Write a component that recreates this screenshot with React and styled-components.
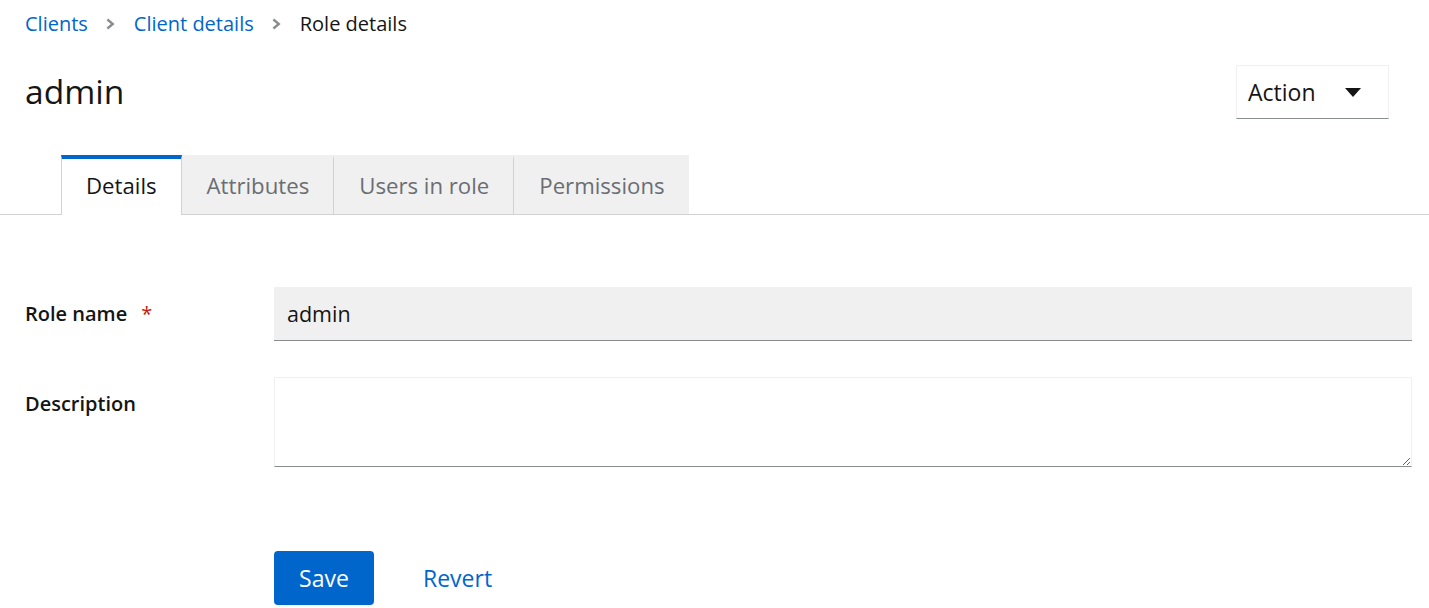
import React from 'react';
import styled, { createGlobalStyle } from 'styled-components';

const GlobalStyle = createGlobalStyle`
*
{
    margin: 0;
    padding: 0;
    box-sizing: border-box;
}

body
{
    margin: 0;
    background: #fff;
    font-family: 'Open Sans', 'Liberation Sans', sans-serif;
    color: #151515;
    overflow: hidden;
}
`;

const Page = styled.div`
	display: flex;
	flex-direction: column;
	width: 1429px;
	height: 608px;
`;

const Breadcrumb = styled.nav`
	display: flex;
	align-items: center;
	gap: 18px;
	padding: 9px 25px 0;
	height: 38px;
	font-size: 20px;
	line-height: 30px;
`;

const Crumb = styled.span`
	color: ${(p) => (p.$current ? '#151515' : '#0066cc')};
`;

const Divider = styled.svg`
	width: 10px;
	height: 12px;
	fill: #8a8d90;
`;

const Header = styled.div`
	display: flex;
	justify-content: space-between;
	align-items: flex-start;
	padding: 27px 40px 0 25px;
	height: 117px;
`;

const Title = styled.h1`
	font-size: 33.6px;
	font-weight: 400;
	line-height: 56px;
	margin-top: -2px;
`;

const ActionButton = styled.button`
	display: flex;
	align-items: center;
	justify-content: space-between;
	width: 153px;
	height: 54px;
	padding: 0 27px 0 11px;
	background: #fff;
	border: 1px solid #f0f0f0;
	border-bottom-color: #8a8d90;
	font-family: inherit;
	font-size: 23px;
	color: #151515;
`;

const Caret = styled.svg`
	width: 16px;
	height: 9px;
	fill: #151515;
`;

const TabList = styled.div`
	display: flex;
	padding-left: 61px;
	border-bottom: 1px solid #d2d2d2;
	height: 60px;
`;

const Tab = styled.div`
	display: flex;
	align-items: center;
	padding: 0 24px 3px;
	font-size: 22.2px;
	color: ${(p) => (p.$active ? '#151515' : '#6a6e73')};
	background: ${(p) => (p.$active ? '#fff' : '#f0f0f0')};
	border-top: 4px solid ${(p) => (p.$active ? '#0066cc' : '#f0f0f0')};
	border-left: 1px solid ${(p) => (p.$active ? '#d2d2d2' : 'transparent')};
	border-right: 1px solid #d2d2d2;
	margin-bottom: ${(p) => (p.$active ? '-1px' : '0')};
	height: ${(p) => (p.$active ? '60px' : '59px')};

	&:last-child {
		border-right: none;
	}
`;

const Form = styled.form`
	display: grid;
	grid-template-columns: 249px 1fr;
	row-gap: 36px;
	padding: 72px 17px 0 25px;
`;

const Label = styled.label`
	display: flex;
	gap: 14px;
	padding-top: 12px;
	font-size: 20px;
	font-weight: 600;
	line-height: 30px;
`;

const Required = styled.span`
	color: #c9190b;
	font-weight: 400;
`;

const TextInput = styled.input`
	height: 54px;
	padding: 0 13px;
	border: none;
	border-bottom: 1px solid #8a8d90;
	background: #f0f0f0;
	font-family: inherit;
	font-size: 21.5px;
	color: #151515;
	outline: none;
`;

const TextArea = styled.textarea`
	height: 90px;
	padding: 8px 13px;
	border: 1px solid #f0f0f0;
	border-bottom-color: #8a8d90;
	background: #fff;
	font-family: inherit;
	font-size: 21.5px;
	resize: vertical;
	outline: none;
`;

const Actions = styled.div`
	grid-column: 2;
	display: flex;
	align-items: center;
	gap: 25px;
	margin-top: 48px;
`;

const PrimaryButton = styled.button`
	height: 54px;
	width: 100px;
	border: none;
	border-radius: 4px;
	background: #0066cc;
	color: #fff;
	font-family: inherit;
	font-size: 23px;
`;

const LinkButton = styled.button`
	height: 54px;
	padding: 0 24px;
	border: none;
	background: none;
	color: #0066cc;
	font-family: inherit;
	font-size: 23px;
`;

function Chevron() {
	return (
		<Divider viewBox="0 0 10 12">
			<path d="M2.2 0.6 L8.6 6 L2.2 11.4 L0.6 9.6 L4.9 6 L0.6 2.4 Z" />
		</Divider>
	);
}

function App() {
	return (
		<Page>
			<GlobalStyle />
			<Breadcrumb>
				<Crumb>Clients</Crumb>
				<Chevron />
				<Crumb>Client details</Crumb>
				<Chevron />
				<Crumb $current>Role details</Crumb>
			</Breadcrumb>
			<Header>
				<Title>admin</Title>
				<ActionButton type="button">
					Action
					<Caret viewBox="0 0 16 9">
						<path d="M0 0 H16 L8 9 Z" />
					</Caret>
				</ActionButton>
			</Header>
			<TabList>
				<Tab $active>Details</Tab>
				<Tab>Attributes</Tab>
				<Tab>Users in role</Tab>
				<Tab>Permissions</Tab>
			</TabList>
			<Form onSubmit={(e) => e.preventDefault()}>
				<Label>
					Role name <Required>*</Required>
				</Label>
				<TextInput defaultValue="admin" />
				<Label>Description</Label>
				<TextArea />
				<Actions>
					<PrimaryButton type="submit">Save</PrimaryButton>
					<LinkButton type="button">Revert</LinkButton>
				</Actions>
			</Form>
		</Page>
	);
}

export default App;
